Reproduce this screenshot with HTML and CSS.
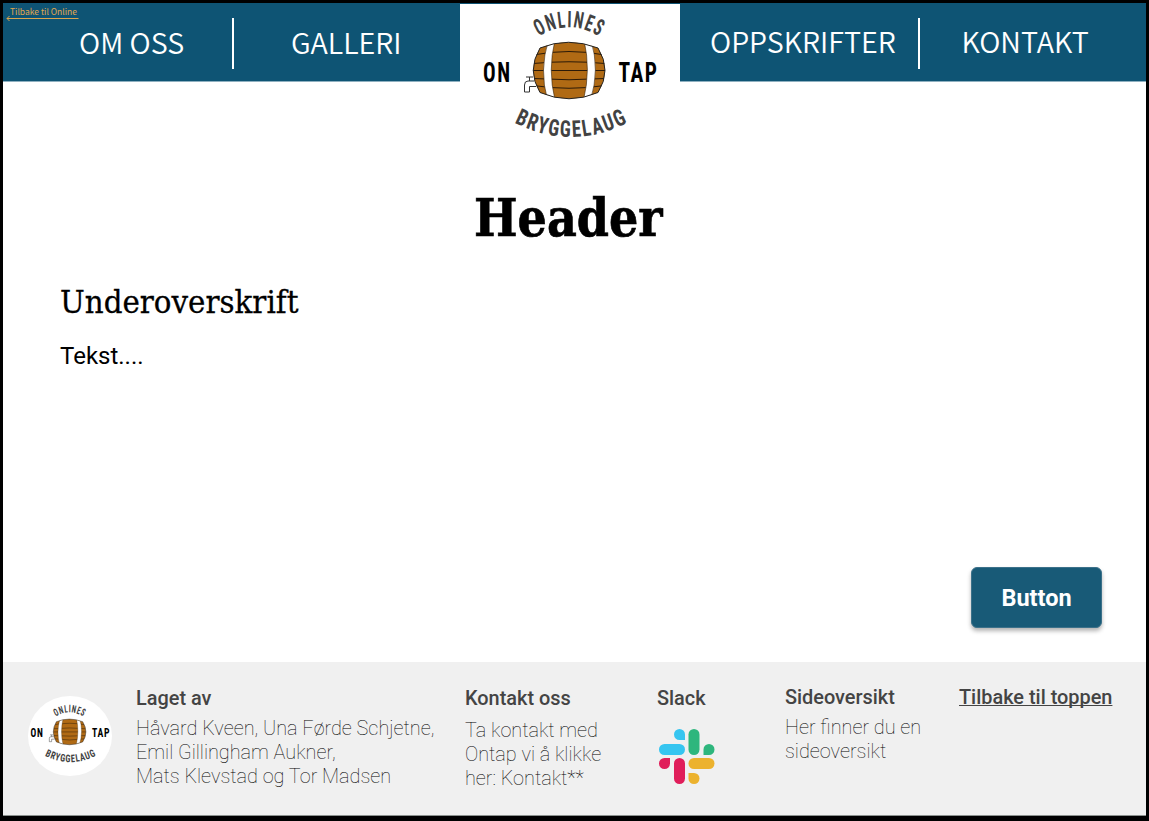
FILE: index.html
```html
<!DOCTYPE html>
<html lang="no">
<head>
<meta charset="utf-8">
<title>Online Ontap</title>
<link rel="stylesheet" href="styles.css">
</head>
<body>
<div class="page">
  <header class="nav">
    <a class="back"><span class="back-text">Tilbake til Online</span>
      <svg class="back-arrow" viewBox="0 0 73 7"><path d="M72.500 3.500H1M3.500 1L1 3.500L3.500 6"/></svg>
    </a>
    <nav class="nav-side nav-left">
      <a class="nav-link om">OM OSS</a>
      <span class="divider"></span>
      <a class="nav-link galleri">GALLERI</a>
    </nav>
    <div class="brand">
      <svg class="brand-logo" viewBox="460 4 220 140">
        <defs>
          <path id="arc-top" d="M529 43.500Q569 11 609 43.500"/>
          <path id="arc-bottom" d="M511 121Q571 153 631 121"/>
          <clipPath id="barrel-clip"><path d="M540 48Q568 36.500 598 48Q612 70.500 598 92.500Q569 105 540 92.500Q526.500 70.500 540 48Z"/></clipPath>
        </defs>
        <g id="logo">
          <text class="logo-arc"><textPath href="#arc-top" startOffset="12" textLength="65" lengthAdjust="spacingAndGlyphs">ONLINES</textPath></text>
          <text class="logo-word" x="483" y="81.500" textLength="28.500" lengthAdjust="spacingAndGlyphs">ON</text>
          <text class="logo-word" x="618.500" y="81.500" textLength="40" lengthAdjust="spacingAndGlyphs">TAP</text>
          <path class="tap" d="M534 81H528Q524.500 81 524.500 85V92H529.500V86.500H536M526 77H533M529.500 77V81"/>
          <path class="barrel" d="M540 48Q568 36.500 598 48Q612 70.500 598 92.500Q569 105 540 92.500Q526.500 70.500 540 48Z"/>
          <g clip-path="url(#barrel-clip)">
            <path class="stave" d="M533 55Q569 48 605 55M533 63.500Q569 60 605 63.500M533 70.500H605M533 78.500Q569 81 605 78.500M533 85.500Q569 91 605 85.500"/>
            <path class="hoop" d="M548.500 40H555Q547.500 70 555 100H547.500Q539 70 548.500 40ZM584 40H591Q600 70 590.500 100H583.500Q591 70 584 40Z"/>
          </g>
          <path class="barrel-outline" d="M540 48Q568 36.500 598 48Q612 70.500 598 92.500Q569 105 540 92.500Q526.500 70.500 540 48Z"/>
          <text class="logo-arc"><textPath href="#arc-bottom" startOffset="3.500" textLength="119.500" lengthAdjust="spacingAndGlyphs">BRYGGELAUG</textPath></text>
        </g>
      </svg>
    </div>
    <nav class="nav-side nav-right">
      <a class="nav-link oppskrifter">OPPSKRIFTER</a>
      <span class="divider"></span>
      <a class="nav-link kontakt">KONTAKT</a>
    </nav>
  </header>

  <main class="content">
    <h1 class="title">Header</h1>
    <h2 class="subtitle">Underoverskrift</h2>
    <p class="text">Tekst....</p>
    <button class="button">Button</button>
  </main>

  <footer class="footer">
    <div class="badge"><svg class="badge-logo" viewBox="477.500 -8 185 175"><use href="#logo"/></svg></div>
    <section class="col made">
      <h3>Laget av</h3>
      <p>Håvard Kveen, Una Førde Schjetne,<br>Emil Gillingham Aukner,<br>Mats Klevstad og Tor Madsen</p>
    </section>
    <section class="col contact">
      <h3>Kontakt oss</h3>
      <p>Ta kontakt med<br>Ontap vi å klikke<br>her: Kontakt**</p>
    </section>
    <section class="col slack">
      <h3>Slack</h3>
      <svg class="slack-logo" viewBox="0 0 56 56">
        <g fill="#36c5f0"><rect x="0" y="15" width="26" height="11" rx="5.500"/><path d="M20.500 0A5.500 5.500 0 0 1 26 5.500V11H20.500A5.500 5.500 0 0 1 20.500 0Z"/></g>
        <g fill="#2eb67d"><rect x="29.500" y="0" width="11" height="26" rx="5.500"/><path d="M44.500 26V20.500A5.500 5.500 0 1 1 50 26Z"/></g>
        <g fill="#e01e5a"><rect x="15" y="29" width="11" height="26" rx="5.500"/><path d="M11 29V34.500A5.500 5.500 0 1 1 5.500 29Z"/></g>
        <g fill="#ecb22e"><rect x="29.500" y="29" width="26" height="11" rx="5.500"/><path d="M29.500 44H35A5.500 5.500 0 1 1 29.500 49.500Z"/></g>
      </svg>
    </section>
    <section class="col overview">
      <h3>Sideoversikt</h3>
      <p>Her finner du en<br>sideoversikt</p>
    </section>
    <section class="col top"><a class="top-link">Tilbake til toppen</a></section>
  </footer>
</div>
</body>
</html>
```
FILE: styles.css
```css
* { box-sizing: border-box; }
body { margin: 0; background: #000; font-family: Roboto, sans-serif; }
h1, h2, h3, p { margin: 0; font-weight: 400; white-space: nowrap; }
.page { width: 1149px; height: 821px; padding: 3px 3px 5px; display: flex; flex-direction: column; overflow: hidden; }

.nav { position: relative; height: 79px; flex: none; display: grid; grid-template-columns: 456.5px 220px 1fr; background: #0e5474; border-bottom: 1px solid #8fb0c0; }
.nav-side { display: flex; align-items: flex-start; padding-top: 15px; }
.nav-link { color: #fff; font: 350 28.700px/48px "Noto Sans CJK SC", sans-serif; white-space: nowrap; }
.nav-left { padding-left: 76px; }
.nav-right { padding-left: 30.500px; }
.nav-right .nav-link { line-height: 45px; }
.om { width: 152.500px; }
.galleri { padding-left: 57px; }
.oppskrifter { width: 207.500px; }
.kontakt { padding-left: 41.500px; }
.divider { width: 2.500px; height: 51px; flex: none; background: #fff; }
.brand { height: 141px; margin-top: 1px; background: #fff; }
.brand-logo { display: block; width: 220px; height: 140px; }

.back { position: absolute; left: 3px; top: 2px; width: 73px; color: #e0a74e; }
.back-text { display: block; padding-left: 4px; font: 400 8.500px/12px "Noto Sans CJK SC", sans-serif; white-space: nowrap; }
.back-arrow { display: block; width: 73px; height: 7px; margin-top: -2px; fill: none; stroke: #d9a54f; }

.logo-arc, .logo-word { font-family: Roboto, sans-serif; font-weight: 700; font-stretch: 75%; letter-spacing: 2px; }
.logo-arc { font-size: 23px; fill: #424242; }
.logo-word { font-size: 28px; fill: #000; }
.barrel { fill: #b06a14; }
.barrel-outline { fill: none; stroke: #222; stroke-width: 1; }
.stave { fill: none; stroke: #2b1a08; stroke-width: 1; }
.hoop { fill: #fff; stroke: #3a2408; stroke-width: .6; }
.tap { fill: none; stroke: #333; stroke-width: 1; }

.content { height: 580px; flex: none; padding: 100px 44px 0 57px; background: #fff; display: flex; flex-direction: column; align-items: flex-start; }
.title { width: 190px; margin-left: 414px; font: 700 53px/70px "Roboto Slab", "DejaVu Serif", serif; -webkit-text-stroke: .7px #000; transform-origin: 0 50%; transform: scaleX(.87); }
.subtitle { margin-top: 30px; font: 400 31px/40px "Roboto Slab", "DejaVu Serif", serif; -webkit-text-stroke: .3px #000; transform-origin: 0 50%; transform: scaleX(.947); }
.text { margin-top: 19px; font-size: 24px; line-height: 30px; }
.button { width: 131px; height: 61px; margin: 195.5px 0 0; padding: 2px 0 0; align-self: flex-end; border: 1px solid #3c718a; border-radius: 6px; background: #185a77; color: #fff; font: 700 23.500px/28px Roboto, sans-serif; box-shadow: 0 3px 4px rgba(0,0,0,.3); }

.footer { flex: 1; display: grid; grid-template-columns: 108px 329px 192px 128px 174px 1fr; padding-left: 25px; background: #f0f0f0; border-bottom: 1px solid #8b918e; }
.badge { width: 84px; height: 80px; margin-top: 34px; border-radius: 50%; background: #fff; }
.badge-logo { display: block; width: 84px; height: 80px; }
.col { padding-top: 24px; color: #444; font-size: 20px; line-height: 24px; }
.col h3 { font-size: 19.900px; line-height: 24px; font-weight: 500; }
.col p { margin-top: 6px; font-size: 19.850px; font-weight: 100; color: #000; }
.made { padding-top: 25px; }
.contact, .slack { padding-top: 25px; }
.contact p { margin-top: 8px; }
.overview { padding-top: 24px; }
.slack-logo { display: block; width: 56px; height: 56px; margin: 18px 0 0 1.500px; }
.top-link { font-size: 19.900px; font-weight: 500; text-decoration: underline; text-decoration-thickness: 1px; text-decoration-skip-ink: none; white-space: nowrap; }
.top { padding-top: 23px; }
```
